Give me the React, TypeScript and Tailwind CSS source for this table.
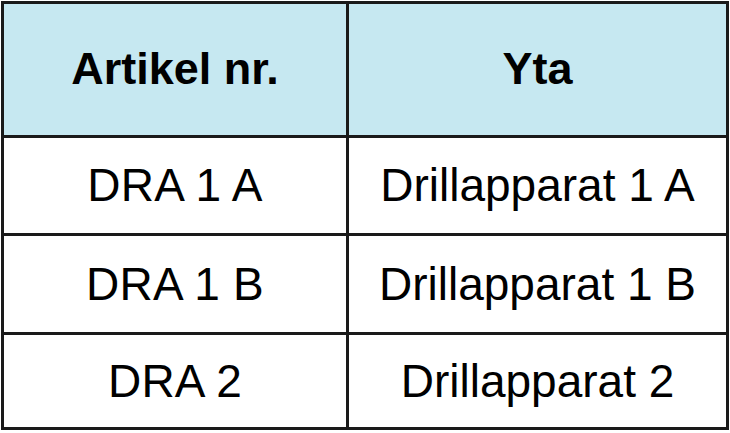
import { Fragment } from "react";

const rows = [
  ["DRA 1 A", "Drillapparat 1 A"],
  ["DRA 1 B", "Drillapparat 1 B"],
  ["DRA 2", "Drillapparat 2"],
];

export default function App() {
  return (
    <div className="w-[730px] h-[433px] bg-white pt-[1px] pl-[1px]" style={{ fontFamily: '"Liberation Sans", Arial, sans-serif' }}>
      <div className="w-[728px] h-[429px] border-[3px] border-[#1a1a1a] bg-[#1a1a1a] grid grid-cols-[342px_377px] grid-rows-[131px_95px_96px_92px] gap-[3px] text-black">
        <div className="bg-[#c6e8f1] flex items-center justify-center text-[45px] font-bold pb-[2px]">Artikel nr.</div>
        <div className="bg-[#c6e8f1] flex items-center justify-center text-[45px] font-bold pb-[2px]">Yta</div>
        {rows.map(([a, b]) => (
          <Fragment key={a}>
            <div className="bg-white flex items-center justify-center text-[46px] tracking-[0.2px]">{a}</div>
            <div className="bg-white flex items-center justify-center text-[46px]">{b}</div>
          </Fragment>
        ))}
      </div>
    </div>
  );
}
